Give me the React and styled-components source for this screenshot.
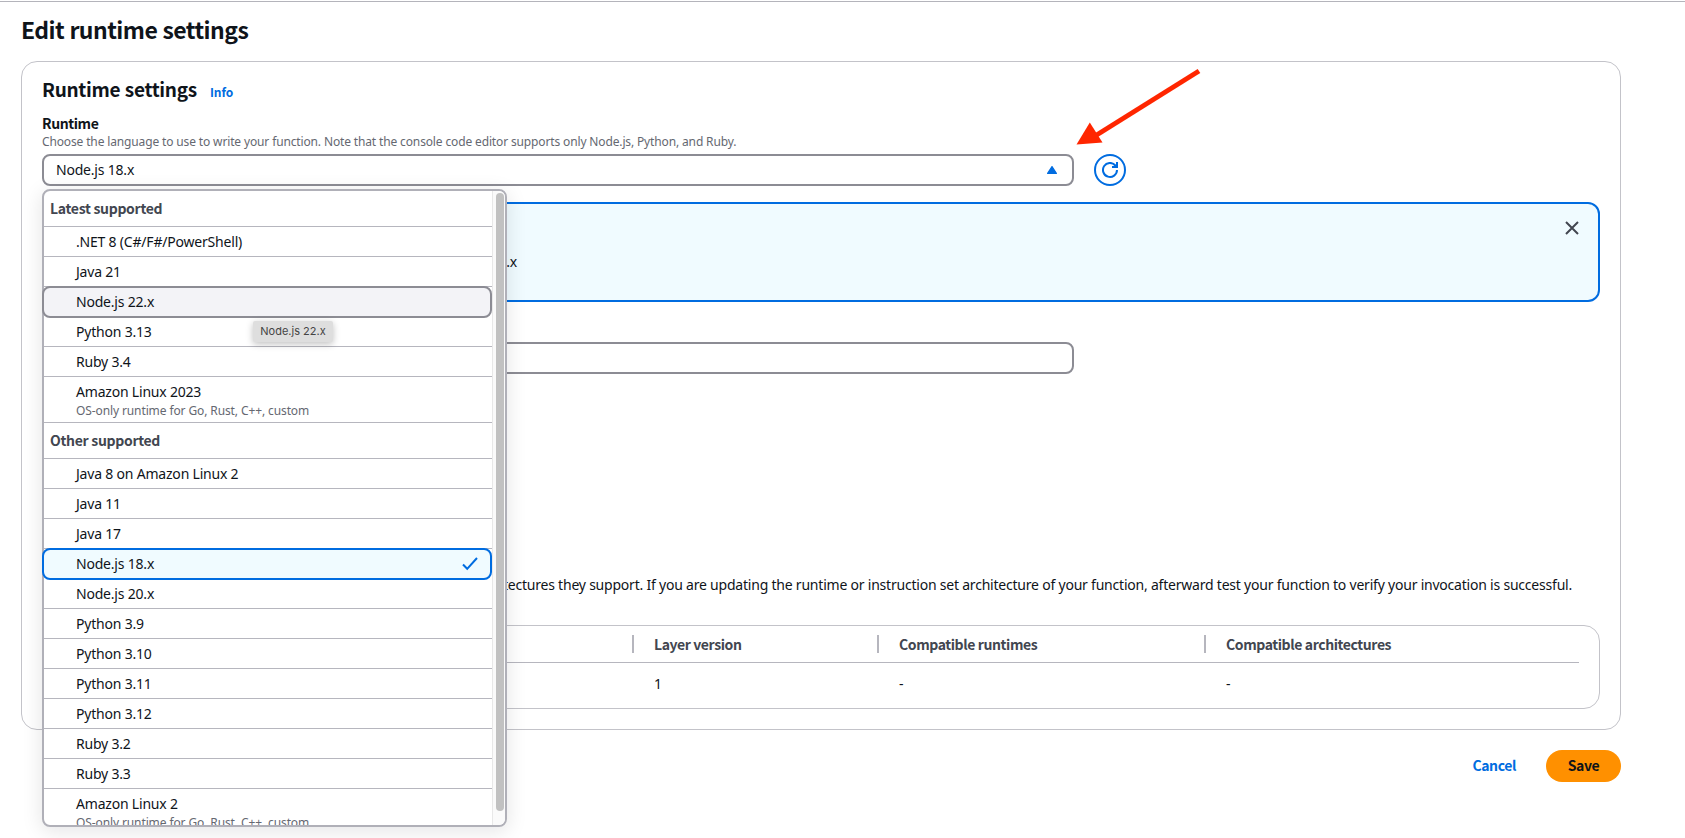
import React from 'react'
import styled, { createGlobalStyle, css } from 'styled-components'

const groups = [
    {
        label: 'Latest supported',
        options: [
            { name: '.NET 8 (C#/F#/PowerShell)' },
            { name: 'Java 21' },
            { name: 'Node.js 22.x', state: 'hover' },
            { name: 'Python 3.13' },
            { name: 'Ruby 3.4' },
            { name: 'Amazon Linux 2023', note: 'OS-only runtime for Go, Rust, C++, custom' },
        ],
    },
    {
        label: 'Other supported',
        options: [
            { name: 'Java 8 on Amazon Linux 2' },
            { name: 'Java 11' },
            { name: 'Java 17' },
            { name: 'Node.js 18.x', state: 'selected' },
            { name: 'Node.js 20.x' },
            { name: 'Python 3.9' },
            { name: 'Python 3.10' },
            { name: 'Python 3.11' },
            { name: 'Python 3.12' },
            { name: 'Ruby 3.2' },
            { name: 'Ruby 3.3' },
            { name: 'Amazon Linux 2', note: 'OS-only runtime for Go, Rust, C++, custom' },
        ],
    },
]

function RuntimeMenu() {
    return (
        <Menu>
            <List>
                {groups.map(group => (
                    <React.Fragment key={group.label}>
                        <GroupLabel>{group.label}</GroupLabel>
                        {group.options.map(({ name, note, state }) => (
                            <Option key={name} $state={state}>
                                <span>{name}</span>
                                {note && <Note>{note}</Note>}
                                {state === 'selected' && <Check />}
                                {state === 'hover' && <Tooltip>{name}</Tooltip>}
                            </Option>
                        ))}
                    </React.Fragment>
                ))}
            </List>
            <Track>
                <Thumb />
            </Track>
        </Menu>
    )
}

function Check() {
    return (
        <CheckIcon width="16" height="16" viewBox="0 0 16 16">
            <path d="M1 8.5l4.2 4.3L15 2" fill="none" stroke="#006ce0" strokeWidth="2" />
        </CheckIcon>
    )
}

function App() {
    return (
        <Page>
            <GlobalStyle />
            <Title>Edit runtime settings</Title>
            <Card>
                <CardHeader>
                    <h2>Runtime settings</h2>
                    <InfoLink>Info</InfoLink>
                </CardHeader>

                <Label>Runtime</Label>
                <Hint>
                    Choose the language to use to write your function. Note that the console code editor supports only Node.js, Python, and Ruby.
                </Hint>
                <FieldRow>
                    <Field>
                        <span>Node.js 18.x</span>
                        <svg width="10" height="8" viewBox="0 0 10 8">
                            <path d="M5 .6L9.4 7.4H.6z" fill="#006ce0" stroke="#006ce0" strokeWidth="1.2" strokeLinejoin="round" />
                        </svg>
                    </Field>
                    <RefreshButton>
                        <svg width="16" height="16" viewBox="0 0 16 16" fill="none" stroke="#006ce0" strokeWidth="2">
                            <path d="M15 8a7 7 0 1 1-1.6-4.5L15 5" />
                            <path d="M15 0v5h-5" />
                        </svg>
                    </RefreshButton>
                    <RuntimeMenu />
                    <Arrow width="126" height="78" viewBox="0 0 126 78">
                        <path d="M123 3L19 68" stroke="#ff2600" strokeWidth="5" />
                        <path d="M.5 76.5L13.8 54.5L26.5 74.5z" fill="#ff2600" />
                    </Arrow>
                </FieldRow>

                <Alert>
                    <AlertText>Node.js 22.x</AlertText>
                    <svg width="14" height="14" viewBox="0 0 14 14">
                        <path d="M1 1l12 12M13 1L1 13" stroke="#424650" strokeWidth="2" />
                    </svg>
                </Alert>

                <HandlerField />

                <Message>
                    architectures they support. If you are updating the runtime or instruction set architecture of your function, afterward test your function to verify your invocation is successful.
                </Message>

                <Table>
                    <Row $head>
                        <Cell />
                        <Cell $divided>Layer version</Cell>
                        <Cell $divided>Compatible runtimes</Cell>
                        <Cell $divided>Compatible architectures</Cell>
                    </Row>
                    <Row>
                        <Cell />
                        <Cell>1</Cell>
                        <Cell>-</Cell>
                        <Cell>-</Cell>
                    </Row>
                </Table>
            </Card>
            <Actions>
                <Cancel>Cancel</Cancel>
                <Save>Save</Save>
            </Actions>
        </Page>
    )
}

export default App

const GlobalStyle = createGlobalStyle`
    * {
        box-sizing: border-box;
    }

    body {
        margin: 0;
        overflow: hidden;
        background: #fff;
        color: #0f141a;
        font-family: "Noto Sans", sans-serif;
        font-size: 14px;
        line-height: 20px;
        letter-spacing: -0.2px;
    }

    svg {
        display: block;
        flex: none;
    }
`

const boldText = css`
    font-family: "Noto Sans CJK SC", "Noto Sans", sans-serif;
    font-weight: 700;
    letter-spacing: -0.4px;
`

const Page = styled.div`
    height: 837px;
    margin-top: 1px;
    padding: 12px 64px 0 21px;
    border-top: 1px solid #b4b4bb;
`

const Title = styled.h1`
    ${boldText}
    margin: 0;
    font-size: 23px;
    line-height: 30px;
    letter-spacing: -0.54px;
    word-spacing: 0.5px;
`

const Card = styled.div`
    height: 669px;
    margin-top: 17px;
    padding: 15px 20px 0;
    border: 1px solid #c3c3c9;
    border-radius: 16px;
`

const CardHeader = styled.div`
    display: flex;
    align-items: baseline;
    gap: 13px;

    h2 {
        ${boldText}
        margin: 0;
        font-size: 19px;
        line-height: 24px;
        letter-spacing: -0.3px;
        word-spacing: 0.5px;
    }
`

const InfoLink = styled.a`
    ${boldText}
    font-size: 12px;
    line-height: 16px;
    letter-spacing: 0;
    color: #006ce0;
`

const Label = styled.div`
    ${boldText}
    margin-top: 12px;
`

const Hint = styled.div`
    height: 16px;
    padding-top: 1px;
    font-size: 12px;
    line-height: 16px;
    letter-spacing: -0.14px;
    color: #656871;
    margin-bottom: 5px;
`

const FieldRow = styled.div`
    position: relative;
    display: flex;
    gap: 20px;
`

const Field = styled.div`
    display: flex;
    align-items: center;
    justify-content: space-between;
    width: 1032px;
    height: 32px;
    padding: 0 15px 0 12px;
    border: 2px solid #8c8c94;
    border-radius: 8px;
    background: #fff;
`

const HandlerField = styled(Field)`
    margin-top: 40px;
`

const RefreshButton = styled.div`
    display: flex;
    align-items: center;
    justify-content: center;
    width: 32px;
    height: 32px;
    border: 2px solid #006ce0;
    border-radius: 50%;
`

const Menu = styled.div`
    position: absolute;
    z-index: 2;
    top: 35px;
    left: 0;
    display: flex;
    width: 465px;
    height: 638px;
    border: 2px solid #b0b0b8;
    border-radius: 8px;
    background: #fff;
    box-shadow: 0 4px 20px 1px rgba(0, 7, 22, 0.1);
`

/* pulled over the menu border so highlighted options can cover it */
const List = styled.div`
    width: 450px;
    margin-left: -2px;
    padding-left: 2px;
    overflow: hidden;
`

const GroupLabel = styled.div`
    ${boldText}
    height: 36px;
    padding: 7px 0 0 6px;
    border-bottom: 1px solid #b6b6be;
    color: #424650;
    letter-spacing: -0.3px;
`

const Option = styled.div`
    position: relative;
    display: flex;
    flex-direction: column;
    padding: 5px 0 4px 32px;
    border-bottom: 1px solid #b6b6be;

    ${props => props.$state && css`
        z-index: 1;
        margin: -1px 0 -1px -2px;
        padding: 4px 0 4px 32px;
        border: 2px solid ${props.$state === 'selected' ? '#006ce0' : '#8c8c94'};
        border-radius: 8px;
        background: ${props.$state === 'selected' ? '#f0fbff' : '#f3f3f7'};
    `}
`

const Note = styled.span`
    margin-top: 1px;
    margin-bottom: -1px;
    font-size: 12px;
    line-height: 16px;
    letter-spacing: -0.11px;
    color: #656871;
`

const CheckIcon = styled.svg`
    position: absolute;
    top: 6px;
    right: 12px;
`

const Tooltip = styled.span`
    position: absolute;
    top: 33px;
    left: 209px;
    width: 80px;
    height: 21px;
    border-radius: 2px;
    background: #dedede;
    box-shadow: 0 2px 7px rgba(0, 0, 0, 0.25);
    color: #444;
    font-family: Inter, sans-serif;
    font-size: 11px;
    line-height: 21px;
    letter-spacing: 0;
    text-align: center;
`

const Track = styled.div`
    width: 13px;
    padding: 2px 1px 0 3px;
    border-left: 1px solid #e8e8e8;
    border-radius: 0 6px 6px 0;
    background: #fafafa;
`

const Thumb = styled.div`
    width: 8px;
    height: 618px;
    border-radius: 4px;
    background: #c1c1c1;
`

const Arrow = styled.svg`
    position: absolute;
    top: -86px;
    left: 1034px;
`

const Alert = styled.div`
    display: flex;
    justify-content: space-between;
    height: 100px;
    margin-top: 16px;
    padding: 17px 19px 0 0;
    border: 2px solid #006ce0;
    border-radius: 12px;
    background: #f0fbff;
`

const AlertText = styled.div`
    width: 473px;
    padding-top: 31px;
    text-align: right;
`

const Message = styled.div`
    height: 20px;
    margin-top: 200px;
    padding: 1px 28px 0 0;
    text-align: right;
    white-space: nowrap;
    letter-spacing: -0.215px;
`

const Table = styled.div`
    height: 84px;
    margin-top: 31px;
    padding: 0 20px;
    border: 1px solid #c3c3c9;
    border-radius: 16px;
`

const Row = styled.div`
    display: grid;
    grid-template-columns: 569px 245px 327px 1fr;
    align-items: center;
    height: 37px;
    color: #424650;

    ${props => props.$head ? css`
        ${boldText}
        border-bottom: 1px solid #b6b6be;
    ` : css`
        height: 41px;
        color: #0f141a;
    `}
`

const Cell = styled.div`
    display: flex;
    align-items: center;
    height: 18px;
    padding-left: 22px;
    line-height: 18px;

    ${props => props.$divided && css`
        padding: 0 0 1px 20px;
        border-left: 2px solid #b6b6be;
    `}
`

const Actions = styled.div`
    display: flex;
    align-items: center;
    justify-content: flex-end;
    gap: 30px;
    margin-top: 20px;
`

const Cancel = styled.a`
    ${boldText}
    padding-bottom: 2px;
    color: #006ce0;
`

const Save = styled.div`
    ${boldText}
    width: 75px;
    height: 32px;
    border-radius: 16px;
    background: #ff9000;
    line-height: 30px;
    text-align: center;
`
